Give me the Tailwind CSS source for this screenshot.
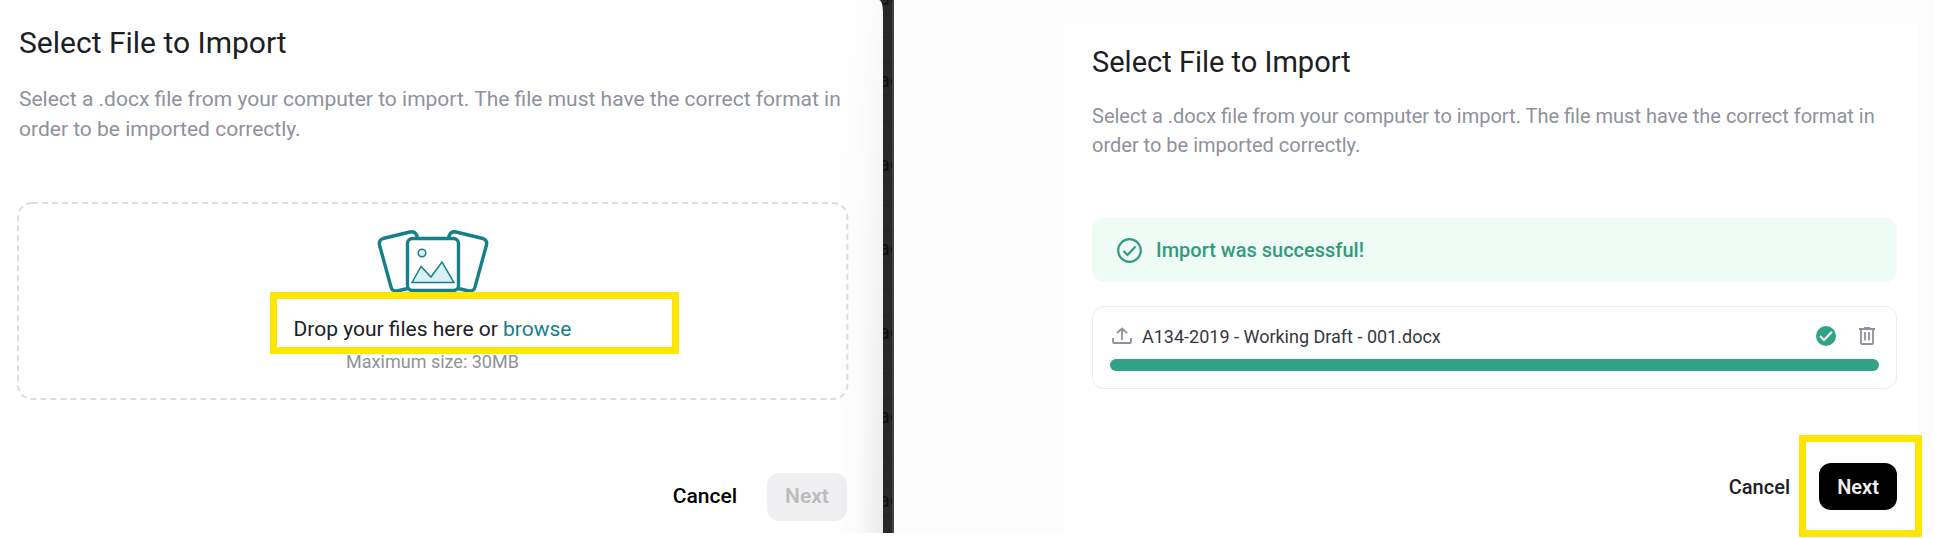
<!DOCTYPE html>
<html lang="en">
<head>
    <meta charset="UTF-8">
    <meta name="viewport" content="width=device-width, initial-scale=1.0">
    <title>Select File to Import</title>
    <script src="https://cdn.jsdelivr.net/npm/@tailwindcss/browser@4"></script>
</head>
<body class="min-h-screen bg-white font-[Roboto,sans-serif] text-[20px]">
    <main class="grid min-h-screen grid-cols-[minmax(0,894fr)_minmax(0,1039fr)] pb-[5px] pr-[2px]">

        <!-- Step 1: choose a file -->
        <div class="flex bg-[#282828]">
            <section class="relative flex grow flex-col bg-white pl-[17px] pr-[35px] pt-[23px] [border-top-right-radius:4px_12px]">
                <div class="pointer-events-none absolute inset-y-0 right-0 w-12 bg-linear-to-l from-black/8 via-black/2 to-transparent [mask-image:linear-gradient(to_bottom,rgb(0_0_0/0.3),black)]"></div>
                <h1 class="pl-[2px] text-[30px] leading-[40px] text-[#1c2024]">Select File to Import</h1>
                <p class="mt-[21px] pl-[2px] text-[21px] leading-[30px] text-[#8f919c]">Select a .docx file from your computer to import. The file must have the correct format in order to be imported correctly.</p>

                <div class="relative mt-[58px] flex h-[198px] flex-col items-center pt-[28px]">
                    <svg class="absolute inset-0 h-full w-full overflow-visible" aria-hidden="true">
                        <rect x="1" y="1" width="99.8%" height="99%" rx="14" fill="none" stroke="#dcdce3" stroke-width="2" stroke-dasharray="6 4"/>
                    </svg>
                    <svg class="h-[63px] w-[112px]" viewBox="0 0 112 63" fill="#fff" stroke="#15808a" stroke-width="3.400" stroke-linejoin="round" aria-hidden="true">
                        <path d="M33 58 L20 61 Q15 61.500 14 57 L2.500 15 Q1.500 10 6 8.500 L33 2 Q38 1 40 6 V57 Z"/>
                        <path d="M79 58 L92 61 Q97 61.500 98 57 L109.500 15 Q110.500 10 106 8.500 L79 2 Q74 1 72 6 V57 Z"/>
                        <rect x="30.500" y="8.500" width="51" height="52" rx="5"/>
                        <circle cx="45" cy="23" r="3.800" fill="#d9f1f5" stroke-width="1.500"/>
                        <path d="M35 52.500 L44 36.500 L54 47 L65 32 L77 52.500 Z" fill="#d9f1f5" stroke-width="1.500" stroke-linejoin="miter"/>
                    </svg>
                    <div class="mt-[21px] text-[21px] leading-[30px] text-[#1c2024]">Drop your files here or <a href="#" class="text-[#15808a]">browse</a></div>
                    <div class="mt-[5px] text-[18px] leading-[26px] text-[#8f919c]">Maximum size: 30MB</div>
                    <div class="pointer-events-none absolute left-[253px] top-[90px] h-[62px] w-[409px] border-[7px] border-[#ffe600]"></div>
                </div>

                <div class="mt-[73px] flex items-center justify-end gap-[30px] pr-[1px] text-[21px] font-medium">
                    <button class="text-black">Cancel</button>
                    <button class="h-12 w-20 rounded-xl bg-[#f0f0f2] font-semibold text-[#bcbcbc]" disabled>Next</button>
                </div>
            </section>

            <!-- Edge of the dimmed page behind the dialog -->
            <div class="relative w-[11px] shrink-0 overflow-hidden border-r-2 border-[#444] text-[20px] text-[#0d1013]">
                <div class="absolute -left-[4px] -top-[20px] w-6">
                    <div class="h-[32px] border-b border-[#222] leading-[36px]">ag</div>
                    <div class="h-[26px] border-b border-[#222]"></div>
                    <div class="h-[26px] border-b border-[#222]"></div>
                    <div class="h-[32px] border-b border-[#222] leading-[32px]">ag</div>
                    <div class="h-[26px] border-b border-[#222]"></div>
                    <div class="h-[26px] border-b border-[#222]"></div>
                    <div class="h-[32px] border-b border-[#222] leading-[32px]">ag</div>
                    <div class="h-[26px] border-b border-[#222]"></div>
                    <div class="h-[26px] border-b border-[#222]"></div>
                    <div class="h-[32px] border-b border-[#222] leading-[32px]">ag</div>
                    <div class="h-[26px] border-b border-[#222]"></div>
                    <div class="h-[26px] border-b border-[#222]"></div>
                    <div class="h-[32px] border-b border-[#222] leading-[32px]">ag</div>
                    <div class="h-[26px] border-b border-[#222]"></div>
                    <div class="h-[26px] border-b border-[#222]"></div>
                    <div class="h-[32px] border-b border-[#222] leading-[32px]">ag</div>
                    <div class="h-[26px] border-b border-[#222]"></div>
                    <div class="h-[26px] border-b border-[#222]"></div>
                    <div class="h-[32px] border-b border-[#222] leading-[32px]">ag</div>
                </div>
            </div>
        </div>

        <!-- Step 2: import finished -->
        <div class="flex bg-[#fcfcfc] pl-[170px] pr-[15px] pt-6">
            <section class="flex grow flex-col bg-white pl-[28px] pr-[21px] pt-[18px]">
                <h2 class="text-[29px] leading-[40px] text-[#1c2024]">Select File to Import</h2>
                <p class="mt-[20px] leading-[29px] text-[#8f919c]">Select a .docx file from your computer to import. The file must have the correct format in order to be imported correctly.</p>

                <div class="mt-[58px] flex h-16 items-center gap-[14px] rounded-xl bg-[#eefcf5] pl-[25px] font-medium text-[#349a7c]">
                    <svg class="h-[25px] w-[25px]" viewBox="0 0 25 25" fill="none" stroke="currentColor" stroke-width="2.200" aria-hidden="true">
                        <circle cx="12.500" cy="12.500" r="11.300"/>
                        <path d="M6.500 13 L10.500 17 L18.500 8.500"/>
                    </svg>
                    Import was successful!
                </div>

                <div class="mt-6 rounded-xl border border-[#ececef] px-[17px] pb-[17px] pt-[15px]">
                    <div class="flex h-[28px] items-center text-[18px] text-[#36383e]">
                        <svg class="mr-[10px] ml-[2px] h-[18px] w-[20px]" viewBox="0 0 20 18" fill="none" stroke="#8f919c" stroke-width="1.800" aria-hidden="true">
                            <path d="M1 11 V15 Q1 16 2 16 H18 Q19 16 19 15 V11"/>
                            <path d="M10 13 V1.500 M5 6 L10 1.500 L15 6"/>
                        </svg>
                        <span class="grow">A134-2019 - Working Draft - 001.docx</span>
                        <svg class="h-5 w-5" viewBox="0 0 20 20" fill="none" aria-hidden="true">
                            <circle cx="10" cy="10" r="10" fill="#32a284"/>
                            <path d="M4 10 L8 14 L16 5.800" stroke="#fff" stroke-width="2"/>
                        </svg>
                        <button class="ml-[23px] mr-[4px]" aria-label="Delete file">
                            <svg class="h-[18px] w-4" viewBox="0 0 16 18" fill="none" stroke="#8f919c" stroke-width="1.800">
                                <path d="M0 2 H16 M5 1 H11 M2 2 V16 Q2 17 3 17 H13 Q14 17 14 16 V2 M6 5 V13.500 M10 5 V13.500"/>
                            </svg>
                        </button>
                    </div>
                    <div class="mt-[9px] h-3 rounded-full bg-[#32a284]"></div>
                </div>

                <div class="mt-[74px] flex items-center justify-end gap-[29px] font-medium">
                    <button class="text-[#1c2024]">Cancel</button>
                    <div class="relative">
                        <button class="h-[47px] w-[78px] rounded-xl bg-black font-semibold text-[#eee]">Next</button>
                        <div class="pointer-events-none absolute -left-[20px] -top-[28px] h-[102px] w-[123px] border-[7px] border-[#ffe600]"></div>
                    </div>
                </div>
            </section>
        </div>
    </main>
</body>
</html>
